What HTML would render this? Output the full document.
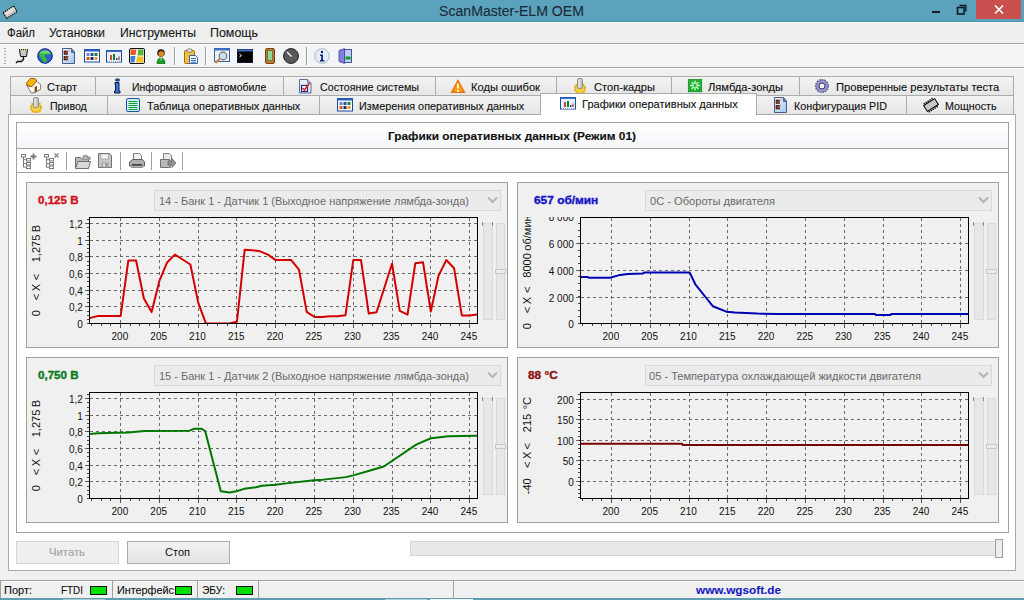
<!DOCTYPE html><html><head><meta charset="utf-8"><style>
html,body{margin:0;padding:0;width:1024px;height:600px;overflow:hidden;background:#f0f0f0;font-family:"Liberation Sans",sans-serif;}
.b{position:absolute;}
.t{position:absolute;white-space:nowrap;-webkit-text-stroke:0.12px currentColor;}
</style></head><body>
<div class="b" style="left:0px;top:0px;width:1024px;height:22px;background:#5ba3bd"></div>
<div class="b" style="left:0px;top:21px;width:1024px;height:1px;background:#4f93a8"></div>
<div class="b" style="left:0px;top:22px;width:1024px;height:1px;background:#f7fafb"></div>
<div class="b" style="left:976px;top:0px;width:45px;height:19px;background:#c9504e"></div>
<svg class="b" style="left:994px;top:5px" width="10" height="9" viewBox="0 0 10 9"><path d="M1 0.5L9 8.5M9 0.5L1 8.5" stroke="#fff" stroke-width="1.6"/></svg>
<div class="b" style="left:932px;top:11px;width:8px;height:2px;background:#0f1c24"></div>
<svg class="b" style="left:956px;top:3px" width="12" height="12" viewBox="0 0 12 12"><rect x="1.5" y="4.5" width="6.5" height="6.5" fill="none" stroke="#0f1c24" stroke-width="1.6"/><path d="M3.5 2.5H9.8V8.5" fill="none" stroke="#0f1c24" stroke-width="1.4"/></svg>
<svg class="b" style="left:0;top:0" width="24" height="22" viewBox="0 0 24 22"><g transform="translate(10.2 12.2) rotate(-33)"><rect x="-6.3" y="-3.4" width="12.6" height="6.8" fill="#c8c6c0" stroke="#101010" stroke-width="1.3" stroke-dasharray="1.3 0.9"/><rect x="-5.2" y="-2.4" width="10.4" height="3" fill="#e4e2dc"/></g></svg>
<div class="b" style="left:0px;top:23px;width:1024px;height:20px;background:#efefef"></div>
<div class="b" style="left:0px;top:43px;width:1024px;height:1px;background:#a3a3a3"></div>
<div class="b" style="left:0px;top:44px;width:1024px;height:1px;background:#ffffff"></div>
<div class="b" style="left:0px;top:45px;width:1024px;height:22px;background:#f3f4f6"></div>
<div class="b" style="left:0px;top:67px;width:1024px;height:1px;background:#a3a3a3"></div>
<div class="b" style="left:0px;top:68px;width:1024px;height:1px;background:#ffffff"></div>
<div class="b" style="left:4px;top:48px;width:2px;height:1px;background:#a8a8a8"></div>
<div class="b" style="left:4px;top:51px;width:2px;height:1px;background:#a8a8a8"></div>
<div class="b" style="left:4px;top:54px;width:2px;height:1px;background:#a8a8a8"></div>
<div class="b" style="left:4px;top:57px;width:2px;height:1px;background:#a8a8a8"></div>
<div class="b" style="left:4px;top:60px;width:2px;height:1px;background:#a8a8a8"></div>
<div class="b" style="left:4px;top:63px;width:2px;height:1px;background:#a8a8a8"></div>
<svg class="b" style="left:15px;top:48px" width="16" height="16" viewBox="0 0 16 16"><path d="M4.5 1.5h8l-1 7h-6z" fill="#c8c8c8" stroke="#101010" stroke-width="1"/>
<path d="M5 1.5h7" stroke="#f0e040" stroke-width="1.2" stroke-dasharray="1 1"/>
<path d="M8.5 9v2.5l-2 2h-4l-1.5 1.5" fill="none" stroke="#101010" stroke-width="1.4"/>
<path d="M7.5 9v1.5l-1.5 1.5h-4" fill="none" stroke="#bbb" stroke-width="0.8"/></svg>
<svg class="b" style="left:37px;top:48px" width="16" height="16" viewBox="0 0 16 16"><circle cx="8" cy="8" r="7.3" fill="#3060d0" stroke="#102080" stroke-width="1"/>
<path d="M2 6c2-4 9-5 12 0c-2 1-5 0-6 1c-1 1 0 3 2 4c0 2-2 4-3 4c-1-2-2-4-3-5c-1-2-1-3-2-4z" fill="#30c030"/>
<path d="M2.5 5.5c2-4 9-4.5 11 0" fill="#a0e0a0" opacity="0.6"/></svg>
<svg class="b" style="left:61px;top:48px" width="16" height="16" viewBox="0 0 16 16"><defs><linearGradient id="gcfg" x1="0" y1="0" x2="1" y2="1"><stop offset="0" stop-color="#f4f8ff"/><stop offset="1" stop-color="#9cc8f0"/></linearGradient></defs>
<path d="M1.5 0.5h9l3 3.5v11.5h-12z" fill="url(#gcfg)" stroke="#4a5a80" stroke-width="1"/>
<path d="M10.5 0.5v4h3" fill="#5070c0" stroke="#4a5a80" stroke-width="0.8"/>
<rect x="3" y="3" width="3.5" height="3.5" fill="#6a2a1a" stroke="#301010" stroke-width="0.6"/>
<rect x="3" y="8.5" width="3.5" height="3.5" fill="#6a2a1a" stroke="#301010" stroke-width="0.6"/>
<path d="M4 4.5l1 1l4-4M4 10l1 1l3-3" fill="none" stroke="#e07060" stroke-width="0.9"/></svg>
<svg class="b" style="left:84px;top:48px" width="16" height="16" viewBox="0 0 16 16"><rect x="0.5" y="1.5" width="15" height="12.5" fill="#fff" stroke="#1a48a0"/>
<rect x="0.5" y="1.5" width="15" height="2" fill="#2a60c0"/>
<rect x="2.5" y="5" width="3" height="3" fill="#8080c0"/><rect x="6.5" y="5" width="3" height="3" fill="#2050b0"/><rect x="10.5" y="5" width="3" height="3" fill="#208030"/>
<rect x="2.5" y="9" width="3" height="3" fill="#e05020"/><rect x="6.5" y="9" width="3" height="3" fill="#103070"/><rect x="10.5" y="9" width="3" height="3" fill="#e0a030"/></svg>
<svg class="b" style="left:106px;top:48px" width="16" height="16" viewBox="0 0 16 16"><rect x="0.5" y="2.5" width="15" height="11.5" fill="#e8f0ff" stroke="#1a48a0"/>
<rect x="0.5" y="2.5" width="15" height="1.5" fill="#3a70c8"/>
<rect x="4" y="7" width="2" height="5" fill="#c05020"/><rect x="7" y="6" width="2" height="6" fill="#108030"/><rect x="10" y="10" width="1.5" height="2" fill="#2050a0"/><rect x="12" y="8.5" width="2" height="3.5" fill="#c08060"/>
<path d="M1.5 6v7.5h13" fill="none" stroke="#fff" stroke-width="1" stroke-dasharray="1 1"/></svg>
<svg class="b" style="left:129px;top:48px" width="16" height="16" viewBox="0 0 16 16"><rect x="0.5" y="0.5" width="15" height="15" rx="1.5" fill="#fff" stroke="#111" stroke-width="1"/>
<path d="M1.5 1.5h6l-1 5.5h-5z" fill="#e85a20"/><path d="M9 1.5h5.5v6h-6z" fill="#60b040"/>
<path d="M1.5 8h5l-1 6.5h-4z" fill="#3a80d8"/><path d="M8 8.5h6.5v6h-7.5z" fill="#f0c020"/></svg>
<svg class="b" style="left:153px;top:48px" width="16" height="16" viewBox="0 0 16 16"><circle cx="8" cy="5" r="3.8" fill="#201810"/>
<circle cx="8.3" cy="5.8" r="2.9" fill="#e08428"/>
<path d="M4 15.5c0-3.5 1.5-5.5 4-5.5s4 2 4 5.5z" fill="#18a020" stroke="#0a6010" stroke-width="0.7"/>
<path d="M7 10.5l1 2l1-2" fill="#d0f0d0"/></svg>
<svg class="b" style="left:183px;top:48px" width="16" height="16" viewBox="0 0 16 16"><rect x="1.5" y="2.5" width="10" height="13" rx="1" fill="#f0c040" stroke="#a07010"/>
<rect x="4" y="1" width="5" height="3" rx="1" fill="#e8e8e8" stroke="#707070" stroke-width="0.8"/>
<path d="M6.5 7.5h6l2 2v6h-8z" fill="#f4f8ff" stroke="#4060a0"/>
<path d="M8 10.5h5M8 12.5h5M8 14.2h5" stroke="#3070d0" stroke-width="1.1"/></svg>
<svg class="b" style="left:214px;top:48px" width="16" height="16" viewBox="0 0 16 16"><rect x="0.5" y="0.5" width="15" height="13" fill="#f0f0f0" stroke="#3060b0"/>
<rect x="0.5" y="0.5" width="15" height="2" fill="#3a70c8"/>
<circle cx="9" cy="8" r="3.8" fill="#c8e0f0" stroke="#707070" stroke-width="1.2"/>
<path d="M6 10.5L1.5 15" stroke="#d08040" stroke-width="2.2"/></svg>
<svg class="b" style="left:237px;top:48px" width="16" height="16" viewBox="0 0 16 16"><rect x="0.5" y="1.5" width="15" height="13" fill="#000" stroke="#101830"/>
<rect x="0.5" y="1.5" width="15" height="2" fill="#3a70c8"/>
<path d="M2.5 6l2 1.5l-2 1.5" fill="none" stroke="#fff" stroke-width="1"/></svg>
<svg class="b" style="left:262px;top:48px" width="16" height="16" viewBox="0 0 16 16"><rect x="3.5" y="0.5" width="9" height="15" rx="1.5" fill="#c07830" stroke="#804010"/>
<rect x="5.5" y="2.5" width="5" height="10" fill="#90d890" stroke="#406040" stroke-width="0.6"/></svg>
<svg class="b" style="left:283px;top:48px" width="16" height="16" viewBox="0 0 16 16"><circle cx="8" cy="8" r="7.5" fill="#505050" stroke="#303030"/>
<circle cx="8" cy="8" r="6" fill="#5a5a5a"/>
<path d="M4 4L8.5 8.5" stroke="#fff" stroke-width="1.2"/></svg>
<svg class="b" style="left:314px;top:48px" width="16" height="16" viewBox="0 0 16 16"><circle cx="8" cy="8" r="7.3" fill="#e4eefa" stroke="#a0a8b8" stroke-width="0.8"/>
<circle cx="8" cy="4" r="1.2" fill="#0a2060"/><path d="M6 6.5h3v5.5h1.3v1.5h-4.3v-1.5h1.2v-4h-1.2z" fill="#0a2a80"/></svg>
<svg class="b" style="left:338px;top:48px" width="16" height="16" viewBox="0 0 16 16"><rect x="6.5" y="1.5" width="7" height="13" fill="#b8d0f8" stroke="#5050a0"/>
<path d="M1 2.5L6.5 0.5V15.5L1 13.5Z" fill="#8080e0" stroke="#4040a0" stroke-width="0.8"/>
<rect x="7.5" y="8.5" width="5" height="3" fill="#10a010"/></svg>
<div class="b" style="left:174px;top:47px;width:1px;height:18px;background:#a0a0a0"></div>
<div class="b" style="left:175px;top:47px;width:1px;height:18px;background:#ffffff"></div>
<div class="b" style="left:205px;top:47px;width:1px;height:18px;background:#a0a0a0"></div>
<div class="b" style="left:206px;top:47px;width:1px;height:18px;background:#ffffff"></div>
<div class="b" style="left:306px;top:47px;width:1px;height:18px;background:#a0a0a0"></div>
<div class="b" style="left:307px;top:47px;width:1px;height:18px;background:#ffffff"></div>
<div class="b" style="left:10px;top:76px;width:86px;height:20px;background:linear-gradient(#f3f3f3,#e6e6e6);border:1px solid #acacac;box-sizing:border-box"></div>
<svg class="b" style="left:26px;top:78px" width="16" height="16" viewBox="0 0 16 16"><path d="M0.8 7.5L5.3 14.8H8.2L14.6 11.3V6.5L10.6 3.3L5 8.5Z" fill="#fffdf6" stroke="#6a6a6a" stroke-width="0.9"/>
<path d="M0.5 5L4.4 0.4L9.4 0.8L10.8 3L5.8 8.8L0.8 7.2Z" fill="#f6b40c" stroke="#8a5c00" stroke-width="0.9"/>
<path d="M8.6 9l2.4-1.2v5.6l-2.4 1.2z" fill="#8a4a08"/></svg>
<div class="b" style="left:95px;top:76px;width:189px;height:20px;background:linear-gradient(#f3f3f3,#e6e6e6);border:1px solid #acacac;box-sizing:border-box"></div>
<svg class="b" style="left:112px;top:78px" width="16" height="16" viewBox="0 0 16 16"><rect x="3.5" y="1" width="4" height="2" rx="1" fill="#3a78d8" stroke="#061a40" stroke-width="0.9"/>
<path d="M3 4.5h4v8.5h1v2h-5.5v-2h1v-6.5h-0.5z" fill="#3a78d8" stroke="#061a40" stroke-width="1"/></svg>
<div class="b" style="left:283px;top:76px;width:153px;height:20px;background:linear-gradient(#f3f3f3,#e6e6e6);border:1px solid #acacac;box-sizing:border-box"></div>
<svg class="b" style="left:297px;top:78px" width="16" height="16" viewBox="0 0 16 16"><path d="M2.5 1.5h8l3.5 3.5v10h-11.5z" fill="#e8eefa" stroke="#5a6fa0"/>
<path d="M10.5 1.5v3.5h3.5" fill="#a8c0f0" stroke="#5a6fa0" stroke-width="0.8"/>
<rect x="4.5" y="7.5" width="6" height="6" fill="#fff" stroke="#1a2c80" stroke-width="1.2"/>
<path d="M5.5 10l2 2l5-7" fill="none" stroke="#e02020" stroke-width="1.6"/></svg>
<div class="b" style="left:435px;top:76px;width:122px;height:20px;background:linear-gradient(#f3f3f3,#e6e6e6);border:1px solid #acacac;box-sizing:border-box"></div>
<svg class="b" style="left:450px;top:78px" width="16" height="16" viewBox="0 0 16 16"><path d="M8 1L15.5 15H0.5Z" fill="#f07010"/><path d="M8 4L13 13.5H3Z" fill="#f8a020"/>
<rect x="7" y="5.5" width="2" height="5" fill="#fff8a0"/><rect x="7" y="12" width="2" height="2" fill="#fff8d0"/></svg>
<div class="b" style="left:556px;top:76px;width:116px;height:20px;background:linear-gradient(#f3f3f3,#e6e6e6);border:1px solid #acacac;box-sizing:border-box"></div>
<svg class="b" style="left:572px;top:78px" width="16" height="16" viewBox="0 0 16 16"><circle cx="8" cy="10.5" r="5.2" fill="#f0c828" stroke="#d8a800" stroke-width="1.8" stroke-dasharray="1.5 1.2"/>
<circle cx="8" cy="10.5" r="4" fill="#f4d040"/>
<rect x="5.5" y="0.5" width="5" height="10" rx="1.5" fill="#c4c4c4" stroke="#8a8a8a" stroke-width="0.9"/>
<rect x="6.5" y="1.5" width="1.5" height="8" fill="#eaeaea"/></svg>
<div class="b" style="left:671px;top:76px;width:129px;height:20px;background:linear-gradient(#f3f3f3,#e6e6e6);border:1px solid #acacac;box-sizing:border-box"></div>
<svg class="b" style="left:687px;top:78px" width="16" height="16" viewBox="0 0 16 16"><rect x="1.3" y="1.5" width="13.4" height="12.3" fill="#22b030" stroke="#0a8a18" stroke-width="0.7"/>
<path d="M9.60 7.50L12.80 7.50M9.13 8.63L11.39 10.89M8.00 9.10L8.00 12.30M6.87 8.63L4.61 10.89M6.40 7.50L3.20 7.50M6.87 6.37L4.61 4.11M8.00 5.90L8.00 2.70M9.13 6.37L11.39 4.11" stroke="#e0ffe0" stroke-width="1.3"/><circle cx="8" cy="7.5" r="1" fill="#30c040"/></svg>
<div class="b" style="left:799px;top:76px;width:215px;height:20px;background:linear-gradient(#f3f3f3,#e6e6e6);border:1px solid #acacac;box-sizing:border-box"></div>
<svg class="b" style="left:814px;top:78px" width="16" height="16" viewBox="0 0 16 16"><circle cx="8" cy="8" r="6.3" fill="#8a8ac8" stroke="#5a5a90" stroke-width="1.6" stroke-dasharray="1.6 1"/>
<circle cx="8" cy="8" r="5.5" fill="#9494d0"/><circle cx="8" cy="8" r="3" fill="#eeeeee" stroke="#3a3a5a" stroke-width="1"/></svg>
<div class="b" style="left:10px;top:95px;width:98px;height:20px;background:linear-gradient(#f3f3f3,#e6e6e6);border:1px solid #acacac;box-sizing:border-box"></div>
<svg class="b" style="left:28px;top:97px" width="16" height="16" viewBox="0 0 16 16"><circle cx="8" cy="10.5" r="5.2" fill="#f0c828" stroke="#d8a800" stroke-width="1.8" stroke-dasharray="1.5 1.2"/>
<circle cx="8" cy="10.5" r="4" fill="#f4d040"/>
<rect x="5.5" y="0.5" width="5" height="10" rx="1.5" fill="#c4c4c4" stroke="#8a8a8a" stroke-width="0.9"/>
<rect x="6.5" y="1.5" width="1.5" height="8" fill="#eaeaea"/></svg>
<div class="b" style="left:107px;top:95px;width:213px;height:20px;background:linear-gradient(#f3f3f3,#e6e6e6);border:1px solid #acacac;box-sizing:border-box"></div>
<svg class="b" style="left:125px;top:97px" width="16" height="16" viewBox="0 0 16 16"><rect x="1.5" y="1.5" width="13" height="13" rx="1.5" fill="#c8f0ff" stroke="#2050a0" stroke-width="1"/>
<path d="M3.5 4.5h9M3.5 6.5h9M3.5 8.5h9M3.5 10.5h9M3.5 12.5h9" stroke="#1a9a30" stroke-width="1"/></svg>
<div class="b" style="left:319px;top:95px;width:222px;height:20px;background:linear-gradient(#f3f3f3,#e6e6e6);border:1px solid #acacac;box-sizing:border-box"></div>
<svg class="b" style="left:337px;top:97px" width="16" height="16" viewBox="0 0 16 16"><rect x="0.5" y="1.5" width="15" height="12.5" fill="#fff" stroke="#1a48a0"/>
<rect x="0.5" y="1.5" width="15" height="2" fill="#2a60c0"/>
<rect x="2.5" y="5" width="3" height="3" fill="#8080c0"/><rect x="6.5" y="5" width="3" height="3" fill="#2050b0"/><rect x="10.5" y="5" width="3" height="3" fill="#208030"/>
<rect x="2.5" y="9" width="3" height="3" fill="#e05020"/><rect x="6.5" y="9" width="3" height="3" fill="#103070"/><rect x="10.5" y="9" width="3" height="3" fill="#e0a030"/></svg>
<div class="b" style="left:756px;top:95px;width:151px;height:20px;background:linear-gradient(#f3f3f3,#e6e6e6);border:1px solid #acacac;box-sizing:border-box"></div>
<svg class="b" style="left:773px;top:97px" width="16" height="16" viewBox="0 0 16 16"><defs><linearGradient id="gcfg" x1="0" y1="0" x2="1" y2="1"><stop offset="0" stop-color="#f4f8ff"/><stop offset="1" stop-color="#9cc8f0"/></linearGradient></defs>
<path d="M1.5 0.5h9l3 3.5v11.5h-12z" fill="url(#gcfg)" stroke="#4a5a80" stroke-width="1"/>
<path d="M10.5 0.5v4h3" fill="#5070c0" stroke="#4a5a80" stroke-width="0.8"/>
<rect x="3" y="3" width="3.5" height="3.5" fill="#6a2a1a" stroke="#301010" stroke-width="0.6"/>
<rect x="3" y="8.5" width="3.5" height="3.5" fill="#6a2a1a" stroke="#301010" stroke-width="0.6"/>
<path d="M4 4.5l1 1l4-4M4 10l1 1l3-3" fill="none" stroke="#e07060" stroke-width="0.9"/></svg>
<div class="b" style="left:906px;top:95px;width:108px;height:20px;background:linear-gradient(#f3f3f3,#e6e6e6);border:1px solid #acacac;box-sizing:border-box"></div>
<svg class="b" style="left:923px;top:97px" width="16" height="16" viewBox="0 0 16 16"><g transform="rotate(-32 8 8)"><rect x="1.5" y="4.5" width="13" height="7" fill="#c8c8c8" stroke="#000" stroke-width="1"/>
<path d="M3 4v-1.5M5.3 4v-1.5M7.6 4v-1.5M9.9 4v-1.5M12.2 4v-1.5M3 12v1.5M5.3 12v1.5M7.6 12v1.5M9.9 12v1.5M12.2 12v1.5" stroke="#000" stroke-width="1.3"/></g></svg>
<div class="b" style="left:8px;top:114px;width:1008px;height:457px;background:#fff;border:1px solid #a9a9a9;box-sizing:border-box"></div>
<div class="b" style="left:16px;top:122px;width:993px;height:411px;background:#fff;border:1px solid #a0a0a0;box-sizing:border-box"></div>
<div class="b" style="left:17px;top:123px;width:991px;height:25px;background:linear-gradient(#ffffff,#f5f6fa)"></div>
<div class="b" style="left:17px;top:148px;width:991px;height:1px;background:#a0a0a0"></div>
<div class="b" style="left:17px;top:172px;width:991px;height:1px;background:#a0a0a0"></div>
<div class="b" style="left:540px;top:93px;width:217px;height:22px;background:#fff;border:1px solid #acacac;border-bottom:none;box-sizing:border-box"></div>
<svg class="b" style="left:560px;top:95px" width="16" height="16" viewBox="0 0 16 16"><rect x="0.5" y="2.5" width="15" height="11.5" fill="#e8f0ff" stroke="#1a48a0"/>
<rect x="0.5" y="2.5" width="15" height="1.5" fill="#3a70c8"/>
<rect x="4" y="7" width="2" height="5" fill="#c05020"/><rect x="7" y="6" width="2" height="6" fill="#108030"/><rect x="10" y="10" width="1.5" height="2" fill="#2050a0"/><rect x="12" y="8.5" width="2" height="3.5" fill="#c08060"/>
<path d="M1.5 6v7.5h13" fill="none" stroke="#fff" stroke-width="1" stroke-dasharray="1 1"/></svg>
<svg class="b" style="left:21px;top:153px" width="16" height="16" viewBox="0 0 16 16"><g fill="none" stroke="#7a7a7a" stroke-width="1"><rect x="0.5" y="1.5" width="4" height="2.5"/><rect x="5.5" y="5.5" width="4" height="2.5"/><rect x="5.5" y="9.5" width="4" height="2.5"/><rect x="5.5" y="13" width="4" height="2.5"/><path d="M2.5 4v10.2h3M2.5 6.7h3M2.5 10.7h3"/></g>
<path d="M12.5 0.5v6M9.5 3.5h6" stroke="#7a7a7a" stroke-width="1.8"/></svg>
<svg class="b" style="left:44px;top:153px" width="16" height="16" viewBox="0 0 16 16"><g fill="none" stroke="#7a7a7a" stroke-width="1"><rect x="0.5" y="1.5" width="4" height="2.5"/><rect x="5.5" y="5.5" width="4" height="2.5"/><rect x="5.5" y="9.5" width="4" height="2.5"/><rect x="5.5" y="13" width="4" height="2.5"/><path d="M2.5 4v10.2h3M2.5 6.7h3M2.5 10.7h3"/></g>
<path d="M10.5 0.5l4 4M14.5 0.5l-4 4" stroke="#8a8a8a" stroke-width="1.4"/></svg>
<svg class="b" style="left:75px;top:153px" width="16" height="16" viewBox="0 0 16 16"><path d="M0.5 4.5h5l1 1.5h7v9h-13z" fill="#b8b8b8" stroke="#707070"/>
<path d="M0.5 15.5l2.5-7h12.5l-2 7z" fill="#d8d8d8" stroke="#707070"/>
<path d="M7 4c2-3 5-3 7 0l1.5-1v4h-4l1.5-1c-1-2-4-2-5 0z" fill="#9a9a9a"/></svg>
<svg class="b" style="left:98px;top:153px" width="16" height="16" viewBox="0 0 16 16"><path d="M0.5 0.5h11l2 2v12h-13z" fill="#c8c8c8" stroke="#707070"/>
<rect x="3" y="1" width="7.5" height="5" fill="#f4f4f4" stroke="#909090" stroke-width="0.6"/>
<rect x="3.5" y="9.5" width="7" height="5" fill="#a0a0a0"/><rect x="5" y="10.5" width="2" height="3" fill="#e0e0e0"/></svg>
<svg class="b" style="left:129px;top:153px" width="16" height="16" viewBox="0 0 16 16"><path d="M4.5 0.5h6l2 2v5h-8z" fill="#f0f0f0" stroke="#808080"/>
<path d="M0.5 9l3-2.5h10l2 2.5v4h-15z" fill="#b0b0b0" stroke="#606060"/>
<rect x="3" y="11" width="10" height="1.5" fill="#404040"/><path d="M2 14.5h12" stroke="#909090"/></svg>
<svg class="b" style="left:160px;top:153px" width="16" height="16" viewBox="0 0 16 16"><path d="M3.5 0.5h6l2 2v6h-8z" fill="#e8e8e8" stroke="#808080"/>
<path d="M0.5 6.5h9l1 8h-10z" fill="#b8b8b8" stroke="#707070"/>
<path d="M8 8h4v-2.5l4 4.5l-4 4.5v-2.5h-4z" fill="#909090" stroke="#606060" stroke-width="0.7"/></svg>
<div class="b" style="left:66px;top:152px;width:1px;height:18px;background:#a0a0a0"></div>
<div class="b" style="left:120px;top:152px;width:1px;height:18px;background:#a0a0a0"></div>
<div class="b" style="left:151px;top:152px;width:1px;height:18px;background:#a0a0a0"></div>
<div class="b" style="left:182px;top:152px;width:1px;height:18px;background:#a0a0a0"></div>
<div class="b" style="left:26px;top:182px;width:482px;height:166px;background:#f0f0f0;border:1px solid #a0a0a0;box-sizing:border-box"></div>
<div class="b" style="left:154px;top:190px;width:347px;height:21px;background:#ebebeb;border:1px solid #d9d9d9;box-sizing:border-box"></div>
<svg class="b" style="left:487px;top:196px" width="11" height="8" viewBox="0 0 11 8"><path d="M1 1.5L5.5 6L10 1.5" fill="none" stroke="#b4b4b4" stroke-width="2"/></svg>
<div class="b" style="left:483px;top:223px;width:10px;height:97px;background:#e6e7e9;border:1px solid #dadada;box-sizing:border-box"></div>
<div class="b" style="left:482px;top:222px;width:1px;height:4px;background:#8a8a8a"></div>
<div class="b" style="left:492px;top:222px;width:1px;height:4px;background:#8a8a8a"></div>
<div class="b" style="left:496px;top:223px;width:9px;height:97px;background:#e6e7e9;border:1px solid #dadada;box-sizing:border-box"></div>
<div class="b" style="left:495px;top:269px;width:11px;height:5px;background:#ececec;border:1px solid #c8c8c8;box-sizing:border-box"></div>
<div class="b" style="left:517px;top:182px;width:482px;height:166px;background:#f0f0f0;border:1px solid #a0a0a0;box-sizing:border-box"></div>
<div class="b" style="left:645px;top:190px;width:347px;height:21px;background:#ebebeb;border:1px solid #d9d9d9;box-sizing:border-box"></div>
<svg class="b" style="left:978px;top:196px" width="11" height="8" viewBox="0 0 11 8"><path d="M1 1.5L5.5 6L10 1.5" fill="none" stroke="#b4b4b4" stroke-width="2"/></svg>
<div class="b" style="left:974px;top:223px;width:10px;height:97px;background:#e6e7e9;border:1px solid #dadada;box-sizing:border-box"></div>
<div class="b" style="left:973px;top:222px;width:1px;height:4px;background:#8a8a8a"></div>
<div class="b" style="left:983px;top:222px;width:1px;height:4px;background:#8a8a8a"></div>
<div class="b" style="left:987px;top:223px;width:9px;height:97px;background:#e6e7e9;border:1px solid #dadada;box-sizing:border-box"></div>
<div class="b" style="left:986px;top:269px;width:11px;height:5px;background:#ececec;border:1px solid #c8c8c8;box-sizing:border-box"></div>
<div class="b" style="left:26px;top:357px;width:482px;height:166px;background:#f0f0f0;border:1px solid #a0a0a0;box-sizing:border-box"></div>
<div class="b" style="left:154px;top:365px;width:347px;height:21px;background:#ebebeb;border:1px solid #d9d9d9;box-sizing:border-box"></div>
<svg class="b" style="left:487px;top:371px" width="11" height="8" viewBox="0 0 11 8"><path d="M1 1.5L5.5 6L10 1.5" fill="none" stroke="#b4b4b4" stroke-width="2"/></svg>
<div class="b" style="left:483px;top:398px;width:10px;height:97px;background:#e6e7e9;border:1px solid #dadada;box-sizing:border-box"></div>
<div class="b" style="left:482px;top:397px;width:1px;height:4px;background:#8a8a8a"></div>
<div class="b" style="left:492px;top:397px;width:1px;height:4px;background:#8a8a8a"></div>
<div class="b" style="left:496px;top:398px;width:9px;height:97px;background:#e6e7e9;border:1px solid #dadada;box-sizing:border-box"></div>
<div class="b" style="left:495px;top:444px;width:11px;height:5px;background:#ececec;border:1px solid #c8c8c8;box-sizing:border-box"></div>
<div class="b" style="left:517px;top:357px;width:482px;height:166px;background:#f0f0f0;border:1px solid #a0a0a0;box-sizing:border-box"></div>
<div class="b" style="left:645px;top:365px;width:347px;height:21px;background:#ebebeb;border:1px solid #d9d9d9;box-sizing:border-box"></div>
<svg class="b" style="left:978px;top:371px" width="11" height="8" viewBox="0 0 11 8"><path d="M1 1.5L5.5 6L10 1.5" fill="none" stroke="#b4b4b4" stroke-width="2"/></svg>
<div class="b" style="left:974px;top:398px;width:10px;height:97px;background:#e6e7e9;border:1px solid #dadada;box-sizing:border-box"></div>
<div class="b" style="left:973px;top:397px;width:1px;height:4px;background:#8a8a8a"></div>
<div class="b" style="left:983px;top:397px;width:1px;height:4px;background:#8a8a8a"></div>
<div class="b" style="left:987px;top:398px;width:9px;height:97px;background:#e6e7e9;border:1px solid #dadada;box-sizing:border-box"></div>
<div class="b" style="left:986px;top:444px;width:11px;height:5px;background:#ececec;border:1px solid #c8c8c8;box-sizing:border-box"></div>
<div class="b" style="left:16px;top:541px;width:103px;height:23px;background:#efefef;border:1px solid #d6d6d6;box-sizing:border-box"></div>
<div class="b" style="left:127px;top:541px;width:103px;height:23px;background:linear-gradient(#f2f2f2,#e4e4e4);border:1px solid #acacac;box-sizing:border-box"></div>
<div class="b" style="left:410px;top:541px;width:593px;height:15px;background:#e7e8e9;border:1px solid #d6d6d6;box-sizing:border-box"></div>
<div class="b" style="left:995px;top:539px;width:8px;height:19px;background:#ececec;border:1px solid #9f9f9f;box-sizing:border-box"></div>
<div class="b" style="left:0px;top:571px;width:1024px;height:9px;background:#f0f0f0"></div>
<div class="b" style="left:0px;top:580px;width:1024px;height:18px;background:#f0f0f0;border-top:1px solid #a0a0a0;box-sizing:border-box"></div>
<div class="b" style="left:0px;top:581px;width:1024px;height:1px;background:#fafafa"></div>
<div class="b" style="left:0px;top:581px;width:1px;height:17px;background:#a0a0a0"></div>
<div class="b" style="left:112px;top:581px;width:1px;height:17px;background:#a0a0a0"></div>
<div class="b" style="left:197px;top:581px;width:1px;height:17px;background:#a0a0a0"></div>
<div class="b" style="left:258px;top:581px;width:1px;height:17px;background:#a0a0a0"></div>
<div class="b" style="left:453px;top:581px;width:1px;height:17px;background:#a0a0a0"></div>
<div class="b" style="left:90px;top:586px;width:17px;height:9px;background:#00e000;border:1px solid #111;box-sizing:border-box"></div>
<div class="b" style="left:175px;top:586px;width:17px;height:9px;background:#00e000;border:1px solid #111;box-sizing:border-box"></div>
<div class="b" style="left:236px;top:586px;width:17px;height:9px;background:#00e000;border:1px solid #111;box-sizing:border-box"></div>
<div class="b" style="left:0px;top:598px;width:1024px;height:2px;background:#5e9db0"></div>
<div class="b" style="left:63px;top:599px;width:42px;height:1px;background:#a9c9d2"></div>
<div class="b" style="left:385px;top:599px;width:42px;height:1px;background:#b3d0d8"></div>
<div class="b" style="left:430px;top:599px;width:43px;height:1px;background:#eef3f5"></div>
<svg class="b" style="left:0;top:0" width="1024" height="600" viewBox="0 0 1024 600">
<defs>
<clipPath id="pc0"><rect x="90" y="218" width="387" height="105"/></clipPath>
<clipPath id="lc0"><rect x="0" y="217" width="89" height="130"/></clipPath>
<clipPath id="pc1"><rect x="581" y="218" width="387" height="105"/></clipPath>
<clipPath id="lc1"><rect x="491" y="217" width="89" height="130"/></clipPath>
<clipPath id="pc2"><rect x="90" y="393" width="387" height="105"/></clipPath>
<clipPath id="lc2"><rect x="0" y="392" width="89" height="130"/></clipPath>
<clipPath id="pc3"><rect x="581" y="393" width="387" height="105"/></clipPath>
<clipPath id="lc3"><rect x="491" y="392" width="89" height="130"/></clipPath>
</defs>
<line x1="90" y1="306.5" x2="477" y2="306.5" stroke="#6a6a6a" stroke-dasharray="3 3"/>
<line x1="85" y1="306.5" x2="89" y2="306.5" stroke="#6a6a6a"/>
<line x1="90" y1="290.5" x2="477" y2="290.5" stroke="#6a6a6a" stroke-dasharray="3 3"/>
<line x1="85" y1="290.5" x2="89" y2="290.5" stroke="#6a6a6a"/>
<line x1="90" y1="273.5" x2="477" y2="273.5" stroke="#6a6a6a" stroke-dasharray="3 3"/>
<line x1="85" y1="273.5" x2="89" y2="273.5" stroke="#6a6a6a"/>
<line x1="90" y1="256.5" x2="477" y2="256.5" stroke="#6a6a6a" stroke-dasharray="3 3"/>
<line x1="85" y1="256.5" x2="89" y2="256.5" stroke="#6a6a6a"/>
<line x1="90" y1="240.5" x2="477" y2="240.5" stroke="#6a6a6a" stroke-dasharray="3 3"/>
<line x1="85" y1="240.5" x2="89" y2="240.5" stroke="#6a6a6a"/>
<line x1="90" y1="223.5" x2="477" y2="223.5" stroke="#6a6a6a" stroke-dasharray="3 3"/>
<line x1="85" y1="223.5" x2="89" y2="223.5" stroke="#6a6a6a"/>
<line x1="120.5" y1="218" x2="120.5" y2="323" stroke="#6a6a6a" stroke-dasharray="3 3"/>
<line x1="120.5" y1="323" x2="120.5" y2="328" stroke="#555"/>
<line x1="159.5" y1="218" x2="159.5" y2="323" stroke="#6a6a6a" stroke-dasharray="3 3"/>
<line x1="159.5" y1="323" x2="159.5" y2="328" stroke="#555"/>
<line x1="198.5" y1="218" x2="198.5" y2="323" stroke="#6a6a6a" stroke-dasharray="3 3"/>
<line x1="198.5" y1="323" x2="198.5" y2="328" stroke="#555"/>
<line x1="236.5" y1="218" x2="236.5" y2="323" stroke="#6a6a6a" stroke-dasharray="3 3"/>
<line x1="236.5" y1="323" x2="236.5" y2="328" stroke="#555"/>
<line x1="275.5" y1="218" x2="275.5" y2="323" stroke="#6a6a6a" stroke-dasharray="3 3"/>
<line x1="275.5" y1="323" x2="275.5" y2="328" stroke="#555"/>
<line x1="314.5" y1="218" x2="314.5" y2="323" stroke="#6a6a6a" stroke-dasharray="3 3"/>
<line x1="314.5" y1="323" x2="314.5" y2="328" stroke="#555"/>
<line x1="353.5" y1="218" x2="353.5" y2="323" stroke="#6a6a6a" stroke-dasharray="3 3"/>
<line x1="353.5" y1="323" x2="353.5" y2="328" stroke="#555"/>
<line x1="392.5" y1="218" x2="392.5" y2="323" stroke="#6a6a6a" stroke-dasharray="3 3"/>
<line x1="392.5" y1="323" x2="392.5" y2="328" stroke="#555"/>
<line x1="430.5" y1="218" x2="430.5" y2="323" stroke="#6a6a6a" stroke-dasharray="3 3"/>
<line x1="430.5" y1="323" x2="430.5" y2="328" stroke="#555"/>
<line x1="469.5" y1="218" x2="469.5" y2="323" stroke="#6a6a6a" stroke-dasharray="3 3"/>
<line x1="469.5" y1="323" x2="469.5" y2="328" stroke="#555"/>
<line x1="87" y1="323.5" x2="89" y2="323.5" stroke="#444"/>
<line x1="87" y1="319.5" x2="89" y2="319.5" stroke="#444"/>
<line x1="87" y1="315.5" x2="89" y2="315.5" stroke="#444"/>
<line x1="87" y1="311.5" x2="89" y2="311.5" stroke="#444"/>
<line x1="87" y1="306.5" x2="89" y2="306.5" stroke="#444"/>
<line x1="87" y1="302.5" x2="89" y2="302.5" stroke="#444"/>
<line x1="87" y1="298.5" x2="89" y2="298.5" stroke="#444"/>
<line x1="87" y1="294.5" x2="89" y2="294.5" stroke="#444"/>
<line x1="87" y1="290.5" x2="89" y2="290.5" stroke="#444"/>
<line x1="87" y1="286.5" x2="89" y2="286.5" stroke="#444"/>
<line x1="87" y1="281.5" x2="89" y2="281.5" stroke="#444"/>
<line x1="87" y1="277.5" x2="89" y2="277.5" stroke="#444"/>
<line x1="87" y1="273.5" x2="89" y2="273.5" stroke="#444"/>
<line x1="87" y1="269.5" x2="89" y2="269.5" stroke="#444"/>
<line x1="87" y1="265.5" x2="89" y2="265.5" stroke="#444"/>
<line x1="87" y1="261.5" x2="89" y2="261.5" stroke="#444"/>
<line x1="87" y1="256.5" x2="89" y2="256.5" stroke="#444"/>
<line x1="87" y1="252.5" x2="89" y2="252.5" stroke="#444"/>
<line x1="87" y1="248.5" x2="89" y2="248.5" stroke="#444"/>
<line x1="87" y1="244.5" x2="89" y2="244.5" stroke="#444"/>
<line x1="87" y1="240.5" x2="89" y2="240.5" stroke="#444"/>
<line x1="87" y1="236.5" x2="89" y2="236.5" stroke="#444"/>
<line x1="87" y1="232.5" x2="89" y2="232.5" stroke="#444"/>
<line x1="87" y1="227.5" x2="89" y2="227.5" stroke="#444"/>
<line x1="87" y1="223.5" x2="89" y2="223.5" stroke="#444"/>
<line x1="87" y1="219.5" x2="89" y2="219.5" stroke="#444"/>
<line x1="91.5" y1="324" x2="91.5" y2="326" stroke="#444"/>
<line x1="101.5" y1="324" x2="101.5" y2="326" stroke="#444"/>
<line x1="110.5" y1="324" x2="110.5" y2="326" stroke="#444"/>
<line x1="130.5" y1="324" x2="130.5" y2="326" stroke="#444"/>
<line x1="139.5" y1="324" x2="139.5" y2="326" stroke="#444"/>
<line x1="149.5" y1="324" x2="149.5" y2="326" stroke="#444"/>
<line x1="169.5" y1="324" x2="169.5" y2="326" stroke="#444"/>
<line x1="178.5" y1="324" x2="178.5" y2="326" stroke="#444"/>
<line x1="188.5" y1="324" x2="188.5" y2="326" stroke="#444"/>
<line x1="207.5" y1="324" x2="207.5" y2="326" stroke="#444"/>
<line x1="217.5" y1="324" x2="217.5" y2="326" stroke="#444"/>
<line x1="227.5" y1="324" x2="227.5" y2="326" stroke="#444"/>
<line x1="246.5" y1="324" x2="246.5" y2="326" stroke="#444"/>
<line x1="256.5" y1="324" x2="256.5" y2="326" stroke="#444"/>
<line x1="266.5" y1="324" x2="266.5" y2="326" stroke="#444"/>
<line x1="285.5" y1="324" x2="285.5" y2="326" stroke="#444"/>
<line x1="295.5" y1="324" x2="295.5" y2="326" stroke="#444"/>
<line x1="304.5" y1="324" x2="304.5" y2="326" stroke="#444"/>
<line x1="324.5" y1="324" x2="324.5" y2="326" stroke="#444"/>
<line x1="333.5" y1="324" x2="333.5" y2="326" stroke="#444"/>
<line x1="343.5" y1="324" x2="343.5" y2="326" stroke="#444"/>
<line x1="362.5" y1="324" x2="362.5" y2="326" stroke="#444"/>
<line x1="372.5" y1="324" x2="372.5" y2="326" stroke="#444"/>
<line x1="382.5" y1="324" x2="382.5" y2="326" stroke="#444"/>
<line x1="401.5" y1="324" x2="401.5" y2="326" stroke="#444"/>
<line x1="411.5" y1="324" x2="411.5" y2="326" stroke="#444"/>
<line x1="421.5" y1="324" x2="421.5" y2="326" stroke="#444"/>
<line x1="440.5" y1="324" x2="440.5" y2="326" stroke="#444"/>
<line x1="450.5" y1="324" x2="450.5" y2="326" stroke="#444"/>
<line x1="459.5" y1="324" x2="459.5" y2="326" stroke="#444"/>
<rect x="89.5" y="217.5" width="388" height="106" fill="none" stroke="#000"/>
<text x="82.8" y="327.5" text-anchor="end" font-size="10" fill="#111" clip-path="url(#lc0)">0</text>
<text x="82.8" y="310.5" text-anchor="end" font-size="10" fill="#111" clip-path="url(#lc0)">0,2</text>
<text x="82.8" y="294.5" text-anchor="end" font-size="10" fill="#111" clip-path="url(#lc0)">0,4</text>
<text x="82.8" y="277.5" text-anchor="end" font-size="10" fill="#111" clip-path="url(#lc0)">0,6</text>
<text x="82.8" y="260.5" text-anchor="end" font-size="10" fill="#111" clip-path="url(#lc0)">0,8</text>
<text x="82.8" y="244.5" text-anchor="end" font-size="10" fill="#111" clip-path="url(#lc0)">1</text>
<text x="82.8" y="227.5" text-anchor="end" font-size="10" fill="#111" clip-path="url(#lc0)">1,2</text>
<text x="119.90" y="340" text-anchor="middle" font-size="10" fill="#111">200</text>
<text x="158.68" y="340" text-anchor="middle" font-size="10" fill="#111">205</text>
<text x="197.45" y="340" text-anchor="middle" font-size="10" fill="#111">210</text>
<text x="236.23" y="340" text-anchor="middle" font-size="10" fill="#111">215</text>
<text x="275.00" y="340" text-anchor="middle" font-size="10" fill="#111">220</text>
<text x="313.78" y="340" text-anchor="middle" font-size="10" fill="#111">225</text>
<text x="352.55" y="340" text-anchor="middle" font-size="10" fill="#111">230</text>
<text x="391.32" y="340" text-anchor="middle" font-size="10" fill="#111">235</text>
<text x="430.10" y="340" text-anchor="middle" font-size="10" fill="#111">240</text>
<text x="468.88" y="340" text-anchor="middle" font-size="10" fill="#111">245</text>
<g clip-path="url(#lc0)">
<text transform="translate(40,313.2) rotate(-90)" text-anchor="middle" font-size="11" fill="#111">0</text>
<text transform="translate(40,297) rotate(-90)" text-anchor="middle" font-size="11" fill="#111">&lt;</text>
<text transform="translate(40,287.5) rotate(-90)" text-anchor="middle" font-size="11" fill="#111">X</text>
<text transform="translate(40,277) rotate(-90)" text-anchor="middle" font-size="11" fill="#111">&lt;</text>
<text transform="translate(40,248.5) rotate(-90)" text-anchor="middle" font-size="11" fill="#111">1,275</text>
<text transform="translate(40,228.5) rotate(-90)" text-anchor="middle" font-size="11" fill="#111">В</text>
</g>
<polyline points="89.58,318.01 97.33,316.10 120.60,316.10 128.35,260.48 136.11,260.48 143.87,298.56 151.62,312.11 159.38,280.93 167.13,262.48 174.88,254.58 182.64,259.48 190.39,264.47 198.15,302.38 205.91,323.50 229.17,323.50 236.93,321.84 244.68,249.75 252.44,250.34 260.19,251.33 267.94,254.58 275.70,260.06 291.21,260.06 298.96,269.54 306.72,311.86 314.48,317.02 322.23,317.02 329.99,316.35 337.74,316.35 345.50,315.19 353.25,260.06 361.00,260.06 368.76,313.52 376.51,312.28 392.02,263.72 399.78,310.95 407.53,314.60 415.29,263.31 423.04,262.31 430.80,311.53 438.56,275.61 446.31,260.06 454.06,268.21 461.82,315.44 469.57,315.44 477.33,314.44" fill="none" stroke="#d40000" stroke-width="2" stroke-linejoin="round" clip-path="url(#pc0)"/>
<line x1="581" y1="297.5" x2="968" y2="297.5" stroke="#6a6a6a" stroke-dasharray="3 3"/>
<line x1="576" y1="297.5" x2="580" y2="297.5" stroke="#6a6a6a"/>
<line x1="581" y1="270.5" x2="968" y2="270.5" stroke="#6a6a6a" stroke-dasharray="3 3"/>
<line x1="576" y1="270.5" x2="580" y2="270.5" stroke="#6a6a6a"/>
<line x1="581" y1="243.5" x2="968" y2="243.5" stroke="#6a6a6a" stroke-dasharray="3 3"/>
<line x1="576" y1="243.5" x2="580" y2="243.5" stroke="#6a6a6a"/>
<line x1="611.5" y1="218" x2="611.5" y2="323" stroke="#6a6a6a" stroke-dasharray="3 3"/>
<line x1="611.5" y1="323" x2="611.5" y2="328" stroke="#555"/>
<line x1="650.5" y1="218" x2="650.5" y2="323" stroke="#6a6a6a" stroke-dasharray="3 3"/>
<line x1="650.5" y1="323" x2="650.5" y2="328" stroke="#555"/>
<line x1="689.5" y1="218" x2="689.5" y2="323" stroke="#6a6a6a" stroke-dasharray="3 3"/>
<line x1="689.5" y1="323" x2="689.5" y2="328" stroke="#555"/>
<line x1="727.5" y1="218" x2="727.5" y2="323" stroke="#6a6a6a" stroke-dasharray="3 3"/>
<line x1="727.5" y1="323" x2="727.5" y2="328" stroke="#555"/>
<line x1="766.5" y1="218" x2="766.5" y2="323" stroke="#6a6a6a" stroke-dasharray="3 3"/>
<line x1="766.5" y1="323" x2="766.5" y2="328" stroke="#555"/>
<line x1="805.5" y1="218" x2="805.5" y2="323" stroke="#6a6a6a" stroke-dasharray="3 3"/>
<line x1="805.5" y1="323" x2="805.5" y2="328" stroke="#555"/>
<line x1="844.5" y1="218" x2="844.5" y2="323" stroke="#6a6a6a" stroke-dasharray="3 3"/>
<line x1="844.5" y1="323" x2="844.5" y2="328" stroke="#555"/>
<line x1="883.5" y1="218" x2="883.5" y2="323" stroke="#6a6a6a" stroke-dasharray="3 3"/>
<line x1="883.5" y1="323" x2="883.5" y2="328" stroke="#555"/>
<line x1="921.5" y1="218" x2="921.5" y2="323" stroke="#6a6a6a" stroke-dasharray="3 3"/>
<line x1="921.5" y1="323" x2="921.5" y2="328" stroke="#555"/>
<line x1="960.5" y1="218" x2="960.5" y2="323" stroke="#6a6a6a" stroke-dasharray="3 3"/>
<line x1="960.5" y1="323" x2="960.5" y2="328" stroke="#555"/>
<line x1="578" y1="323.5" x2="580" y2="323.5" stroke="#444"/>
<line x1="578" y1="316.5" x2="580" y2="316.5" stroke="#444"/>
<line x1="578" y1="310.5" x2="580" y2="310.5" stroke="#444"/>
<line x1="578" y1="303.5" x2="580" y2="303.5" stroke="#444"/>
<line x1="578" y1="296.5" x2="580" y2="296.5" stroke="#444"/>
<line x1="578" y1="290.5" x2="580" y2="290.5" stroke="#444"/>
<line x1="578" y1="283.5" x2="580" y2="283.5" stroke="#444"/>
<line x1="578" y1="276.5" x2="580" y2="276.5" stroke="#444"/>
<line x1="578" y1="270.5" x2="580" y2="270.5" stroke="#444"/>
<line x1="578" y1="263.5" x2="580" y2="263.5" stroke="#444"/>
<line x1="578" y1="256.5" x2="580" y2="256.5" stroke="#444"/>
<line x1="578" y1="250.5" x2="580" y2="250.5" stroke="#444"/>
<line x1="578" y1="243.5" x2="580" y2="243.5" stroke="#444"/>
<line x1="578" y1="236.5" x2="580" y2="236.5" stroke="#444"/>
<line x1="578" y1="230.5" x2="580" y2="230.5" stroke="#444"/>
<line x1="578" y1="223.5" x2="580" y2="223.5" stroke="#444"/>
<line x1="582.5" y1="324" x2="582.5" y2="326" stroke="#444"/>
<line x1="592.5" y1="324" x2="592.5" y2="326" stroke="#444"/>
<line x1="601.5" y1="324" x2="601.5" y2="326" stroke="#444"/>
<line x1="621.5" y1="324" x2="621.5" y2="326" stroke="#444"/>
<line x1="630.5" y1="324" x2="630.5" y2="326" stroke="#444"/>
<line x1="640.5" y1="324" x2="640.5" y2="326" stroke="#444"/>
<line x1="660.5" y1="324" x2="660.5" y2="326" stroke="#444"/>
<line x1="669.5" y1="324" x2="669.5" y2="326" stroke="#444"/>
<line x1="679.5" y1="324" x2="679.5" y2="326" stroke="#444"/>
<line x1="698.5" y1="324" x2="698.5" y2="326" stroke="#444"/>
<line x1="708.5" y1="324" x2="708.5" y2="326" stroke="#444"/>
<line x1="718.5" y1="324" x2="718.5" y2="326" stroke="#444"/>
<line x1="737.5" y1="324" x2="737.5" y2="326" stroke="#444"/>
<line x1="747.5" y1="324" x2="747.5" y2="326" stroke="#444"/>
<line x1="757.5" y1="324" x2="757.5" y2="326" stroke="#444"/>
<line x1="776.5" y1="324" x2="776.5" y2="326" stroke="#444"/>
<line x1="786.5" y1="324" x2="786.5" y2="326" stroke="#444"/>
<line x1="795.5" y1="324" x2="795.5" y2="326" stroke="#444"/>
<line x1="815.5" y1="324" x2="815.5" y2="326" stroke="#444"/>
<line x1="824.5" y1="324" x2="824.5" y2="326" stroke="#444"/>
<line x1="834.5" y1="324" x2="834.5" y2="326" stroke="#444"/>
<line x1="853.5" y1="324" x2="853.5" y2="326" stroke="#444"/>
<line x1="863.5" y1="324" x2="863.5" y2="326" stroke="#444"/>
<line x1="873.5" y1="324" x2="873.5" y2="326" stroke="#444"/>
<line x1="892.5" y1="324" x2="892.5" y2="326" stroke="#444"/>
<line x1="902.5" y1="324" x2="902.5" y2="326" stroke="#444"/>
<line x1="912.5" y1="324" x2="912.5" y2="326" stroke="#444"/>
<line x1="931.5" y1="324" x2="931.5" y2="326" stroke="#444"/>
<line x1="941.5" y1="324" x2="941.5" y2="326" stroke="#444"/>
<line x1="950.5" y1="324" x2="950.5" y2="326" stroke="#444"/>
<rect x="580.5" y="217.5" width="388" height="106" fill="none" stroke="#000"/>
<text x="573.8" y="327.5" text-anchor="end" font-size="10" fill="#111" clip-path="url(#lc1)">0</text>
<text x="573.8" y="301.5" text-anchor="end" font-size="10" fill="#111" clip-path="url(#lc1)">2 000</text>
<text x="573.8" y="274.5" text-anchor="end" font-size="10" fill="#111" clip-path="url(#lc1)">4 000</text>
<text x="573.8" y="247.5" text-anchor="end" font-size="10" fill="#111" clip-path="url(#lc1)">6 000</text>
<text x="573.8" y="220.5" text-anchor="end" font-size="10" fill="#111" clip-path="url(#lc1)">8 000</text>
<text x="610.90" y="340" text-anchor="middle" font-size="10" fill="#111">200</text>
<text x="649.67" y="340" text-anchor="middle" font-size="10" fill="#111">205</text>
<text x="688.45" y="340" text-anchor="middle" font-size="10" fill="#111">210</text>
<text x="727.22" y="340" text-anchor="middle" font-size="10" fill="#111">215</text>
<text x="766.00" y="340" text-anchor="middle" font-size="10" fill="#111">220</text>
<text x="804.77" y="340" text-anchor="middle" font-size="10" fill="#111">225</text>
<text x="843.55" y="340" text-anchor="middle" font-size="10" fill="#111">230</text>
<text x="882.32" y="340" text-anchor="middle" font-size="10" fill="#111">235</text>
<text x="921.10" y="340" text-anchor="middle" font-size="10" fill="#111">240</text>
<text x="959.88" y="340" text-anchor="middle" font-size="10" fill="#111">245</text>
<g clip-path="url(#lc1)">
<text transform="translate(531,326.3) rotate(-90)" text-anchor="middle" font-size="11" fill="#111">0</text>
<text transform="translate(531,310) rotate(-90)" text-anchor="middle" font-size="11" fill="#111">&lt;</text>
<text transform="translate(531,300.5) rotate(-90)" text-anchor="middle" font-size="11" fill="#111">X</text>
<text transform="translate(531,289.7) rotate(-90)" text-anchor="middle" font-size="11" fill="#111">&lt;</text>
<text transform="translate(531,265.4) rotate(-90)" text-anchor="middle" font-size="11" fill="#111">8000</text>
<text transform="translate(531,233) rotate(-90)" text-anchor="middle" font-size="11" fill="#111">об/мин</text>
</g>
<polyline points="580.58,276.90 587.56,276.90 588.72,277.70 610.05,277.70 620.13,274.90 627.89,273.96 642.62,273.57 644.17,272.60 689.69,272.60 695.35,284.30 704.66,296.00 712.80,306.20 726.37,311.67 734.90,312.60 757.39,313.60 778.33,314.00 875.27,314.11 875.66,314.91 890.78,314.91 891.17,314.11 968.33,314.11" fill="none" stroke="#0000b4" stroke-width="2" stroke-linejoin="round" clip-path="url(#pc1)"/>
<line x1="90" y1="481.5" x2="477" y2="481.5" stroke="#6a6a6a" stroke-dasharray="3 3"/>
<line x1="85" y1="481.5" x2="89" y2="481.5" stroke="#6a6a6a"/>
<line x1="90" y1="465.5" x2="477" y2="465.5" stroke="#6a6a6a" stroke-dasharray="3 3"/>
<line x1="85" y1="465.5" x2="89" y2="465.5" stroke="#6a6a6a"/>
<line x1="90" y1="448.5" x2="477" y2="448.5" stroke="#6a6a6a" stroke-dasharray="3 3"/>
<line x1="85" y1="448.5" x2="89" y2="448.5" stroke="#6a6a6a"/>
<line x1="90" y1="431.5" x2="477" y2="431.5" stroke="#6a6a6a" stroke-dasharray="3 3"/>
<line x1="85" y1="431.5" x2="89" y2="431.5" stroke="#6a6a6a"/>
<line x1="90" y1="415.5" x2="477" y2="415.5" stroke="#6a6a6a" stroke-dasharray="3 3"/>
<line x1="85" y1="415.5" x2="89" y2="415.5" stroke="#6a6a6a"/>
<line x1="90" y1="398.5" x2="477" y2="398.5" stroke="#6a6a6a" stroke-dasharray="3 3"/>
<line x1="85" y1="398.5" x2="89" y2="398.5" stroke="#6a6a6a"/>
<line x1="120.5" y1="393" x2="120.5" y2="498" stroke="#6a6a6a" stroke-dasharray="3 3"/>
<line x1="120.5" y1="498" x2="120.5" y2="503" stroke="#555"/>
<line x1="159.5" y1="393" x2="159.5" y2="498" stroke="#6a6a6a" stroke-dasharray="3 3"/>
<line x1="159.5" y1="498" x2="159.5" y2="503" stroke="#555"/>
<line x1="198.5" y1="393" x2="198.5" y2="498" stroke="#6a6a6a" stroke-dasharray="3 3"/>
<line x1="198.5" y1="498" x2="198.5" y2="503" stroke="#555"/>
<line x1="236.5" y1="393" x2="236.5" y2="498" stroke="#6a6a6a" stroke-dasharray="3 3"/>
<line x1="236.5" y1="498" x2="236.5" y2="503" stroke="#555"/>
<line x1="275.5" y1="393" x2="275.5" y2="498" stroke="#6a6a6a" stroke-dasharray="3 3"/>
<line x1="275.5" y1="498" x2="275.5" y2="503" stroke="#555"/>
<line x1="314.5" y1="393" x2="314.5" y2="498" stroke="#6a6a6a" stroke-dasharray="3 3"/>
<line x1="314.5" y1="498" x2="314.5" y2="503" stroke="#555"/>
<line x1="353.5" y1="393" x2="353.5" y2="498" stroke="#6a6a6a" stroke-dasharray="3 3"/>
<line x1="353.5" y1="498" x2="353.5" y2="503" stroke="#555"/>
<line x1="392.5" y1="393" x2="392.5" y2="498" stroke="#6a6a6a" stroke-dasharray="3 3"/>
<line x1="392.5" y1="498" x2="392.5" y2="503" stroke="#555"/>
<line x1="430.5" y1="393" x2="430.5" y2="498" stroke="#6a6a6a" stroke-dasharray="3 3"/>
<line x1="430.5" y1="498" x2="430.5" y2="503" stroke="#555"/>
<line x1="469.5" y1="393" x2="469.5" y2="498" stroke="#6a6a6a" stroke-dasharray="3 3"/>
<line x1="469.5" y1="498" x2="469.5" y2="503" stroke="#555"/>
<line x1="87" y1="498.5" x2="89" y2="498.5" stroke="#444"/>
<line x1="87" y1="494.5" x2="89" y2="494.5" stroke="#444"/>
<line x1="87" y1="490.5" x2="89" y2="490.5" stroke="#444"/>
<line x1="87" y1="486.5" x2="89" y2="486.5" stroke="#444"/>
<line x1="87" y1="481.5" x2="89" y2="481.5" stroke="#444"/>
<line x1="87" y1="477.5" x2="89" y2="477.5" stroke="#444"/>
<line x1="87" y1="473.5" x2="89" y2="473.5" stroke="#444"/>
<line x1="87" y1="469.5" x2="89" y2="469.5" stroke="#444"/>
<line x1="87" y1="465.5" x2="89" y2="465.5" stroke="#444"/>
<line x1="87" y1="461.5" x2="89" y2="461.5" stroke="#444"/>
<line x1="87" y1="456.5" x2="89" y2="456.5" stroke="#444"/>
<line x1="87" y1="452.5" x2="89" y2="452.5" stroke="#444"/>
<line x1="87" y1="448.5" x2="89" y2="448.5" stroke="#444"/>
<line x1="87" y1="444.5" x2="89" y2="444.5" stroke="#444"/>
<line x1="87" y1="440.5" x2="89" y2="440.5" stroke="#444"/>
<line x1="87" y1="436.5" x2="89" y2="436.5" stroke="#444"/>
<line x1="87" y1="431.5" x2="89" y2="431.5" stroke="#444"/>
<line x1="87" y1="427.5" x2="89" y2="427.5" stroke="#444"/>
<line x1="87" y1="423.5" x2="89" y2="423.5" stroke="#444"/>
<line x1="87" y1="419.5" x2="89" y2="419.5" stroke="#444"/>
<line x1="87" y1="415.5" x2="89" y2="415.5" stroke="#444"/>
<line x1="87" y1="411.5" x2="89" y2="411.5" stroke="#444"/>
<line x1="87" y1="407.5" x2="89" y2="407.5" stroke="#444"/>
<line x1="87" y1="402.5" x2="89" y2="402.5" stroke="#444"/>
<line x1="87" y1="398.5" x2="89" y2="398.5" stroke="#444"/>
<line x1="87" y1="394.5" x2="89" y2="394.5" stroke="#444"/>
<line x1="91.5" y1="499" x2="91.5" y2="501" stroke="#444"/>
<line x1="101.5" y1="499" x2="101.5" y2="501" stroke="#444"/>
<line x1="110.5" y1="499" x2="110.5" y2="501" stroke="#444"/>
<line x1="130.5" y1="499" x2="130.5" y2="501" stroke="#444"/>
<line x1="139.5" y1="499" x2="139.5" y2="501" stroke="#444"/>
<line x1="149.5" y1="499" x2="149.5" y2="501" stroke="#444"/>
<line x1="169.5" y1="499" x2="169.5" y2="501" stroke="#444"/>
<line x1="178.5" y1="499" x2="178.5" y2="501" stroke="#444"/>
<line x1="188.5" y1="499" x2="188.5" y2="501" stroke="#444"/>
<line x1="207.5" y1="499" x2="207.5" y2="501" stroke="#444"/>
<line x1="217.5" y1="499" x2="217.5" y2="501" stroke="#444"/>
<line x1="227.5" y1="499" x2="227.5" y2="501" stroke="#444"/>
<line x1="246.5" y1="499" x2="246.5" y2="501" stroke="#444"/>
<line x1="256.5" y1="499" x2="256.5" y2="501" stroke="#444"/>
<line x1="266.5" y1="499" x2="266.5" y2="501" stroke="#444"/>
<line x1="285.5" y1="499" x2="285.5" y2="501" stroke="#444"/>
<line x1="295.5" y1="499" x2="295.5" y2="501" stroke="#444"/>
<line x1="304.5" y1="499" x2="304.5" y2="501" stroke="#444"/>
<line x1="324.5" y1="499" x2="324.5" y2="501" stroke="#444"/>
<line x1="333.5" y1="499" x2="333.5" y2="501" stroke="#444"/>
<line x1="343.5" y1="499" x2="343.5" y2="501" stroke="#444"/>
<line x1="362.5" y1="499" x2="362.5" y2="501" stroke="#444"/>
<line x1="372.5" y1="499" x2="372.5" y2="501" stroke="#444"/>
<line x1="382.5" y1="499" x2="382.5" y2="501" stroke="#444"/>
<line x1="401.5" y1="499" x2="401.5" y2="501" stroke="#444"/>
<line x1="411.5" y1="499" x2="411.5" y2="501" stroke="#444"/>
<line x1="421.5" y1="499" x2="421.5" y2="501" stroke="#444"/>
<line x1="440.5" y1="499" x2="440.5" y2="501" stroke="#444"/>
<line x1="450.5" y1="499" x2="450.5" y2="501" stroke="#444"/>
<line x1="459.5" y1="499" x2="459.5" y2="501" stroke="#444"/>
<rect x="89.5" y="392.5" width="388" height="106" fill="none" stroke="#000"/>
<text x="82.8" y="502.5" text-anchor="end" font-size="10" fill="#111" clip-path="url(#lc2)">0</text>
<text x="82.8" y="485.5" text-anchor="end" font-size="10" fill="#111" clip-path="url(#lc2)">0,2</text>
<text x="82.8" y="469.5" text-anchor="end" font-size="10" fill="#111" clip-path="url(#lc2)">0,4</text>
<text x="82.8" y="452.5" text-anchor="end" font-size="10" fill="#111" clip-path="url(#lc2)">0,6</text>
<text x="82.8" y="435.5" text-anchor="end" font-size="10" fill="#111" clip-path="url(#lc2)">0,8</text>
<text x="82.8" y="419.5" text-anchor="end" font-size="10" fill="#111" clip-path="url(#lc2)">1</text>
<text x="82.8" y="402.5" text-anchor="end" font-size="10" fill="#111" clip-path="url(#lc2)">1,2</text>
<text x="119.90" y="515" text-anchor="middle" font-size="10" fill="#111">200</text>
<text x="158.68" y="515" text-anchor="middle" font-size="10" fill="#111">205</text>
<text x="197.45" y="515" text-anchor="middle" font-size="10" fill="#111">210</text>
<text x="236.23" y="515" text-anchor="middle" font-size="10" fill="#111">215</text>
<text x="275.00" y="515" text-anchor="middle" font-size="10" fill="#111">220</text>
<text x="313.78" y="515" text-anchor="middle" font-size="10" fill="#111">225</text>
<text x="352.55" y="515" text-anchor="middle" font-size="10" fill="#111">230</text>
<text x="391.32" y="515" text-anchor="middle" font-size="10" fill="#111">235</text>
<text x="430.10" y="515" text-anchor="middle" font-size="10" fill="#111">240</text>
<text x="468.88" y="515" text-anchor="middle" font-size="10" fill="#111">245</text>
<g clip-path="url(#lc2)">
<text transform="translate(40,488.2) rotate(-90)" text-anchor="middle" font-size="11" fill="#111">0</text>
<text transform="translate(40,472) rotate(-90)" text-anchor="middle" font-size="11" fill="#111">&lt;</text>
<text transform="translate(40,462.5) rotate(-90)" text-anchor="middle" font-size="11" fill="#111">X</text>
<text transform="translate(40,452) rotate(-90)" text-anchor="middle" font-size="11" fill="#111">&lt;</text>
<text transform="translate(40,423.5) rotate(-90)" text-anchor="middle" font-size="11" fill="#111">1,275</text>
<text transform="translate(40,403.5) rotate(-90)" text-anchor="middle" font-size="11" fill="#111">В</text>
</g>
<polyline points="89.58,433.98 97.72,433.32 127.97,432.57 144.56,430.99 189.54,430.66 194.43,428.66 201.25,428.66 205.13,430.99 220.79,491.18 229.56,492.51 236.38,491.18 244.21,488.86 255.92,487.28 261.82,485.70 275.47,484.70 286.01,483.37 314.09,480.21 323.32,479.63 345.88,477.13 354.10,475.14 368.45,470.98 383.80,466.49 413.58,446.37 416.61,444.38 430.96,438.22 448.40,436.14 477.33,435.73" fill="none" stroke="#007800" stroke-width="2" stroke-linejoin="round" clip-path="url(#pc2)"/>
<line x1="581" y1="481.5" x2="968" y2="481.5" stroke="#6a6a6a" stroke-dasharray="3 3"/>
<line x1="576" y1="481.5" x2="580" y2="481.5" stroke="#6a6a6a"/>
<line x1="581" y1="460.5" x2="968" y2="460.5" stroke="#6a6a6a" stroke-dasharray="3 3"/>
<line x1="576" y1="460.5" x2="580" y2="460.5" stroke="#6a6a6a"/>
<line x1="581" y1="440.5" x2="968" y2="440.5" stroke="#6a6a6a" stroke-dasharray="3 3"/>
<line x1="576" y1="440.5" x2="580" y2="440.5" stroke="#6a6a6a"/>
<line x1="581" y1="419.5" x2="968" y2="419.5" stroke="#6a6a6a" stroke-dasharray="3 3"/>
<line x1="576" y1="419.5" x2="580" y2="419.5" stroke="#6a6a6a"/>
<line x1="581" y1="399.5" x2="968" y2="399.5" stroke="#6a6a6a" stroke-dasharray="3 3"/>
<line x1="576" y1="399.5" x2="580" y2="399.5" stroke="#6a6a6a"/>
<line x1="611.5" y1="393" x2="611.5" y2="498" stroke="#6a6a6a" stroke-dasharray="3 3"/>
<line x1="611.5" y1="498" x2="611.5" y2="503" stroke="#555"/>
<line x1="650.5" y1="393" x2="650.5" y2="498" stroke="#6a6a6a" stroke-dasharray="3 3"/>
<line x1="650.5" y1="498" x2="650.5" y2="503" stroke="#555"/>
<line x1="689.5" y1="393" x2="689.5" y2="498" stroke="#6a6a6a" stroke-dasharray="3 3"/>
<line x1="689.5" y1="498" x2="689.5" y2="503" stroke="#555"/>
<line x1="727.5" y1="393" x2="727.5" y2="498" stroke="#6a6a6a" stroke-dasharray="3 3"/>
<line x1="727.5" y1="498" x2="727.5" y2="503" stroke="#555"/>
<line x1="766.5" y1="393" x2="766.5" y2="498" stroke="#6a6a6a" stroke-dasharray="3 3"/>
<line x1="766.5" y1="498" x2="766.5" y2="503" stroke="#555"/>
<line x1="805.5" y1="393" x2="805.5" y2="498" stroke="#6a6a6a" stroke-dasharray="3 3"/>
<line x1="805.5" y1="498" x2="805.5" y2="503" stroke="#555"/>
<line x1="844.5" y1="393" x2="844.5" y2="498" stroke="#6a6a6a" stroke-dasharray="3 3"/>
<line x1="844.5" y1="498" x2="844.5" y2="503" stroke="#555"/>
<line x1="883.5" y1="393" x2="883.5" y2="498" stroke="#6a6a6a" stroke-dasharray="3 3"/>
<line x1="883.5" y1="498" x2="883.5" y2="503" stroke="#555"/>
<line x1="921.5" y1="393" x2="921.5" y2="498" stroke="#6a6a6a" stroke-dasharray="3 3"/>
<line x1="921.5" y1="498" x2="921.5" y2="503" stroke="#555"/>
<line x1="960.5" y1="393" x2="960.5" y2="498" stroke="#6a6a6a" stroke-dasharray="3 3"/>
<line x1="960.5" y1="498" x2="960.5" y2="503" stroke="#555"/>
<line x1="578" y1="497.5" x2="580" y2="497.5" stroke="#444"/>
<line x1="578" y1="493.5" x2="580" y2="493.5" stroke="#444"/>
<line x1="578" y1="489.5" x2="580" y2="489.5" stroke="#444"/>
<line x1="578" y1="485.5" x2="580" y2="485.5" stroke="#444"/>
<line x1="578" y1="481.5" x2="580" y2="481.5" stroke="#444"/>
<line x1="578" y1="477.5" x2="580" y2="477.5" stroke="#444"/>
<line x1="578" y1="472.5" x2="580" y2="472.5" stroke="#444"/>
<line x1="578" y1="468.5" x2="580" y2="468.5" stroke="#444"/>
<line x1="578" y1="464.5" x2="580" y2="464.5" stroke="#444"/>
<line x1="578" y1="460.5" x2="580" y2="460.5" stroke="#444"/>
<line x1="578" y1="456.5" x2="580" y2="456.5" stroke="#444"/>
<line x1="578" y1="452.5" x2="580" y2="452.5" stroke="#444"/>
<line x1="578" y1="448.5" x2="580" y2="448.5" stroke="#444"/>
<line x1="578" y1="444.5" x2="580" y2="444.5" stroke="#444"/>
<line x1="578" y1="440.5" x2="580" y2="440.5" stroke="#444"/>
<line x1="578" y1="436.5" x2="580" y2="436.5" stroke="#444"/>
<line x1="578" y1="431.5" x2="580" y2="431.5" stroke="#444"/>
<line x1="578" y1="427.5" x2="580" y2="427.5" stroke="#444"/>
<line x1="578" y1="423.5" x2="580" y2="423.5" stroke="#444"/>
<line x1="578" y1="419.5" x2="580" y2="419.5" stroke="#444"/>
<line x1="578" y1="415.5" x2="580" y2="415.5" stroke="#444"/>
<line x1="578" y1="411.5" x2="580" y2="411.5" stroke="#444"/>
<line x1="578" y1="407.5" x2="580" y2="407.5" stroke="#444"/>
<line x1="578" y1="403.5" x2="580" y2="403.5" stroke="#444"/>
<line x1="578" y1="399.5" x2="580" y2="399.5" stroke="#444"/>
<line x1="578" y1="394.5" x2="580" y2="394.5" stroke="#444"/>
<line x1="582.5" y1="499" x2="582.5" y2="501" stroke="#444"/>
<line x1="592.5" y1="499" x2="592.5" y2="501" stroke="#444"/>
<line x1="601.5" y1="499" x2="601.5" y2="501" stroke="#444"/>
<line x1="621.5" y1="499" x2="621.5" y2="501" stroke="#444"/>
<line x1="630.5" y1="499" x2="630.5" y2="501" stroke="#444"/>
<line x1="640.5" y1="499" x2="640.5" y2="501" stroke="#444"/>
<line x1="660.5" y1="499" x2="660.5" y2="501" stroke="#444"/>
<line x1="669.5" y1="499" x2="669.5" y2="501" stroke="#444"/>
<line x1="679.5" y1="499" x2="679.5" y2="501" stroke="#444"/>
<line x1="698.5" y1="499" x2="698.5" y2="501" stroke="#444"/>
<line x1="708.5" y1="499" x2="708.5" y2="501" stroke="#444"/>
<line x1="718.5" y1="499" x2="718.5" y2="501" stroke="#444"/>
<line x1="737.5" y1="499" x2="737.5" y2="501" stroke="#444"/>
<line x1="747.5" y1="499" x2="747.5" y2="501" stroke="#444"/>
<line x1="757.5" y1="499" x2="757.5" y2="501" stroke="#444"/>
<line x1="776.5" y1="499" x2="776.5" y2="501" stroke="#444"/>
<line x1="786.5" y1="499" x2="786.5" y2="501" stroke="#444"/>
<line x1="795.5" y1="499" x2="795.5" y2="501" stroke="#444"/>
<line x1="815.5" y1="499" x2="815.5" y2="501" stroke="#444"/>
<line x1="824.5" y1="499" x2="824.5" y2="501" stroke="#444"/>
<line x1="834.5" y1="499" x2="834.5" y2="501" stroke="#444"/>
<line x1="853.5" y1="499" x2="853.5" y2="501" stroke="#444"/>
<line x1="863.5" y1="499" x2="863.5" y2="501" stroke="#444"/>
<line x1="873.5" y1="499" x2="873.5" y2="501" stroke="#444"/>
<line x1="892.5" y1="499" x2="892.5" y2="501" stroke="#444"/>
<line x1="902.5" y1="499" x2="902.5" y2="501" stroke="#444"/>
<line x1="912.5" y1="499" x2="912.5" y2="501" stroke="#444"/>
<line x1="931.5" y1="499" x2="931.5" y2="501" stroke="#444"/>
<line x1="941.5" y1="499" x2="941.5" y2="501" stroke="#444"/>
<line x1="950.5" y1="499" x2="950.5" y2="501" stroke="#444"/>
<rect x="580.5" y="392.5" width="388" height="106" fill="none" stroke="#000"/>
<text x="573.8" y="485.5" text-anchor="end" font-size="10" fill="#111" clip-path="url(#lc3)">0</text>
<text x="573.8" y="464.5" text-anchor="end" font-size="10" fill="#111" clip-path="url(#lc3)">50</text>
<text x="573.8" y="444.5" text-anchor="end" font-size="10" fill="#111" clip-path="url(#lc3)">100</text>
<text x="573.8" y="423.5" text-anchor="end" font-size="10" fill="#111" clip-path="url(#lc3)">150</text>
<text x="573.8" y="403.5" text-anchor="end" font-size="10" fill="#111" clip-path="url(#lc3)">200</text>
<text x="610.90" y="515" text-anchor="middle" font-size="10" fill="#111">200</text>
<text x="649.67" y="515" text-anchor="middle" font-size="10" fill="#111">205</text>
<text x="688.45" y="515" text-anchor="middle" font-size="10" fill="#111">210</text>
<text x="727.22" y="515" text-anchor="middle" font-size="10" fill="#111">215</text>
<text x="766.00" y="515" text-anchor="middle" font-size="10" fill="#111">220</text>
<text x="804.77" y="515" text-anchor="middle" font-size="10" fill="#111">225</text>
<text x="843.55" y="515" text-anchor="middle" font-size="10" fill="#111">230</text>
<text x="882.32" y="515" text-anchor="middle" font-size="10" fill="#111">235</text>
<text x="921.10" y="515" text-anchor="middle" font-size="10" fill="#111">240</text>
<text x="959.88" y="515" text-anchor="middle" font-size="10" fill="#111">245</text>
<g clip-path="url(#lc3)">
<text transform="translate(531,486.3) rotate(-90)" text-anchor="middle" font-size="11" fill="#111">-40</text>
<text transform="translate(531,464.8) rotate(-90)" text-anchor="middle" font-size="11" fill="#111">&lt;</text>
<text transform="translate(531,455.4) rotate(-90)" text-anchor="middle" font-size="11" fill="#111">X</text>
<text transform="translate(531,446.4) rotate(-90)" text-anchor="middle" font-size="11" fill="#111">&lt;</text>
<text transform="translate(531,423) rotate(-90)" text-anchor="middle" font-size="11" fill="#111">215</text>
<text transform="translate(531,403.2) rotate(-90)" text-anchor="middle" font-size="11" fill="#111">°C</text>
</g>
<polyline points="580.58,443.84 682.17,443.84 682.56,444.95 968.33,444.95" fill="none" stroke="#780000" stroke-width="2" stroke-linejoin="round" clip-path="url(#pc3)"/>
</svg>
<span class="t" style="left:439px;top:4.06px;font-size:14.7px;line-height:14.7px;color:#1b2a36;font-weight:normal;transform:scaleX(0.9603);transform-origin:0 0;-webkit-text-stroke:0.1px currentColor;">ScanMaster-ELM OEM</span>
<span class="t" style="left:7px;top:26.84px;font-size:12px;line-height:12px;color:#1a1a1a;font-weight:normal;transform:scaleX(0.9491);transform-origin:0 0;">Файл</span>
<span class="t" style="left:49px;top:26.84px;font-size:12px;line-height:12px;color:#1a1a1a;font-weight:normal;transform:scaleX(0.9914);transform-origin:0 0;">Установки</span>
<span class="t" style="left:120px;top:26.84px;font-size:12px;line-height:12px;color:#1a1a1a;font-weight:normal;transform:scaleX(1.0157);transform-origin:0 0;">Инструменты</span>
<span class="t" style="left:210px;top:26.84px;font-size:12px;line-height:12px;color:#1a1a1a;font-weight:normal;transform:scaleX(1.0357);transform-origin:0 0;">Помощь</span>
<span class="t" style="left:46.7px;top:81.69px;font-size:11px;line-height:11px;color:#111;font-weight:normal;transform:scaleX(1.0037);transform-origin:0 0;">Старт</span>
<span class="t" style="left:131.7px;top:81.69px;font-size:11px;line-height:11px;color:#111;font-weight:normal;transform:scaleX(0.9525);transform-origin:0 0;">Информация о автомобиле</span>
<span class="t" style="left:319.7px;top:81.69px;font-size:11px;line-height:11px;color:#111;font-weight:normal;transform:scaleX(0.9745);transform-origin:0 0;">Состояние системы</span>
<span class="t" style="left:471px;top:81.69px;font-size:11px;line-height:11px;color:#111;font-weight:normal;transform:scaleX(1.0150);transform-origin:0 0;">Коды ошибок</span>
<span class="t" style="left:594px;top:81.69px;font-size:11px;line-height:11px;color:#111;font-weight:normal;transform:scaleX(1.0131);transform-origin:0 0;">Стоп-кадры</span>
<span class="t" style="left:708px;top:81.69px;font-size:11px;line-height:11px;color:#111;font-weight:normal;transform:scaleX(1.0127);transform-origin:0 0;">Лямбда-зонды</span>
<span class="t" style="left:835.7px;top:81.69px;font-size:11px;line-height:11px;color:#111;font-weight:normal;transform:scaleX(1.0126);transform-origin:0 0;">Проверенные результаты теста</span>
<span class="t" style="left:49.8px;top:100.69px;font-size:11px;line-height:11px;color:#111;font-weight:normal;transform:scaleX(0.9638);transform-origin:0 0;">Привод</span>
<span class="t" style="left:146.7px;top:100.69px;font-size:11px;line-height:11px;color:#111;font-weight:normal;transform:scaleX(0.9953);transform-origin:0 0;">Таблица оперативных данных</span>
<span class="t" style="left:358.8px;top:100.69px;font-size:11px;line-height:11px;color:#111;font-weight:normal;transform:scaleX(0.9837);transform-origin:0 0;">Измерения оперативных данных</span>
<span class="t" style="left:794px;top:100.69px;font-size:11px;line-height:11px;color:#111;font-weight:normal;transform:scaleX(0.9768);transform-origin:0 0;">Конфигурация PID</span>
<span class="t" style="left:945px;top:100.69px;font-size:11px;line-height:11px;color:#111;font-weight:normal;transform:scaleX(0.9732);transform-origin:0 0;">Мощность</span>
<span class="t" style="left:581.8px;top:98.69px;font-size:11px;line-height:11px;color:#111;font-weight:normal;transform:scaleX(1.0070);transform-origin:0 0;">Графики оперативных данных</span>
<span class="t" style="left:388px;top:130.69px;font-size:11px;line-height:11px;color:#111;font-weight:bold;transform:scaleX(1.0777);transform-origin:0 0;">Графики оперативных данных (Режим 01)</span>
<span class="t" style="left:159px;top:195.69px;font-size:11px;line-height:11px;color:#6a6a6a;font-weight:normal;transform:scaleX(0.9984);transform-origin:0 0;-webkit-text-stroke:0;">14 - Банк 1 - Датчик 1 (Выходное напряжение лямбда-зонда)</span>
<span class="t" style="left:37.5px;top:196.17px;font-size:10.2px;line-height:10.2px;color:#d0121c;font-weight:bold;transform:scaleX(1.1351);transform-origin:0 0;-webkit-text-stroke:0.35px currentColor;">0,125 В</span>
<span class="t" style="left:650px;top:195.69px;font-size:11px;line-height:11px;color:#6a6a6a;font-weight:normal;transform:scaleX(1.0089);transform-origin:0 0;-webkit-text-stroke:0;">0C - Обороты двигателя</span>
<span class="t" style="left:534px;top:196.17px;font-size:10.2px;line-height:10.2px;color:#1414c8;font-weight:bold;transform:scaleX(1.1664);transform-origin:0 0;-webkit-text-stroke:0.35px currentColor;">657 об/мин</span>
<span class="t" style="left:159px;top:370.69px;font-size:11px;line-height:11px;color:#6a6a6a;font-weight:normal;transform:scaleX(0.9984);transform-origin:0 0;-webkit-text-stroke:0;">15 - Банк 1 - Датчик 2 (Выходное напряжение лямбда-зонда)</span>
<span class="t" style="left:37.5px;top:371.17px;font-size:10.2px;line-height:10.2px;color:#0a7a1a;font-weight:bold;transform:scaleX(1.1351);transform-origin:0 0;-webkit-text-stroke:0.35px currentColor;">0,750 В</span>
<span class="t" style="left:649px;top:370.69px;font-size:11px;line-height:11px;color:#6a6a6a;font-weight:normal;transform:scaleX(1.0077);transform-origin:0 0;-webkit-text-stroke:0;">05 - Температура охлаждающей жидкости двигателя</span>
<span class="t" style="left:528px;top:371.17px;font-size:10.2px;line-height:10.2px;color:#8c1414;font-weight:bold;transform:scaleX(1.1605);transform-origin:0 0;-webkit-text-stroke:0.35px currentColor;">88 °C</span>
<span class="t" style="left:49px;top:546.69px;font-size:11px;line-height:11px;color:#a3a3a3;font-weight:normal;transform:scaleX(1.0275);transform-origin:0 0;">Читать</span>
<span class="t" style="left:165px;top:546.69px;font-size:11px;line-height:11px;color:#111;font-weight:normal;transform:scaleX(1.0027);transform-origin:0 0;-webkit-text-stroke:0;">Стоп</span>
<span class="t" style="left:4px;top:584.69px;font-size:11px;line-height:11px;color:#111;font-weight:normal;transform:scaleX(1.0002);transform-origin:0 0;">Порт:</span>
<span class="t" style="left:61px;top:584.69px;font-size:11px;line-height:11px;color:#111;font-weight:normal;transform:scaleX(0.9002);transform-origin:0 0;">FTDI</span>
<span class="t" style="left:117px;top:584.69px;font-size:11px;line-height:11px;color:#111;font-weight:normal;transform:scaleX(0.9836);transform-origin:0 0;">Интерфейс:</span>
<span class="t" style="left:202px;top:584.69px;font-size:11px;line-height:11px;color:#111;font-weight:normal;transform:scaleX(0.9321);transform-origin:0 0;">ЭБУ:</span>
<span class="t" style="left:696px;top:584.69px;font-size:11px;line-height:11px;color:#1a1ac0;font-weight:bold;transform:scaleX(1.0672);transform-origin:0 0;">www.wgsoft.de</span>
</body></html>
